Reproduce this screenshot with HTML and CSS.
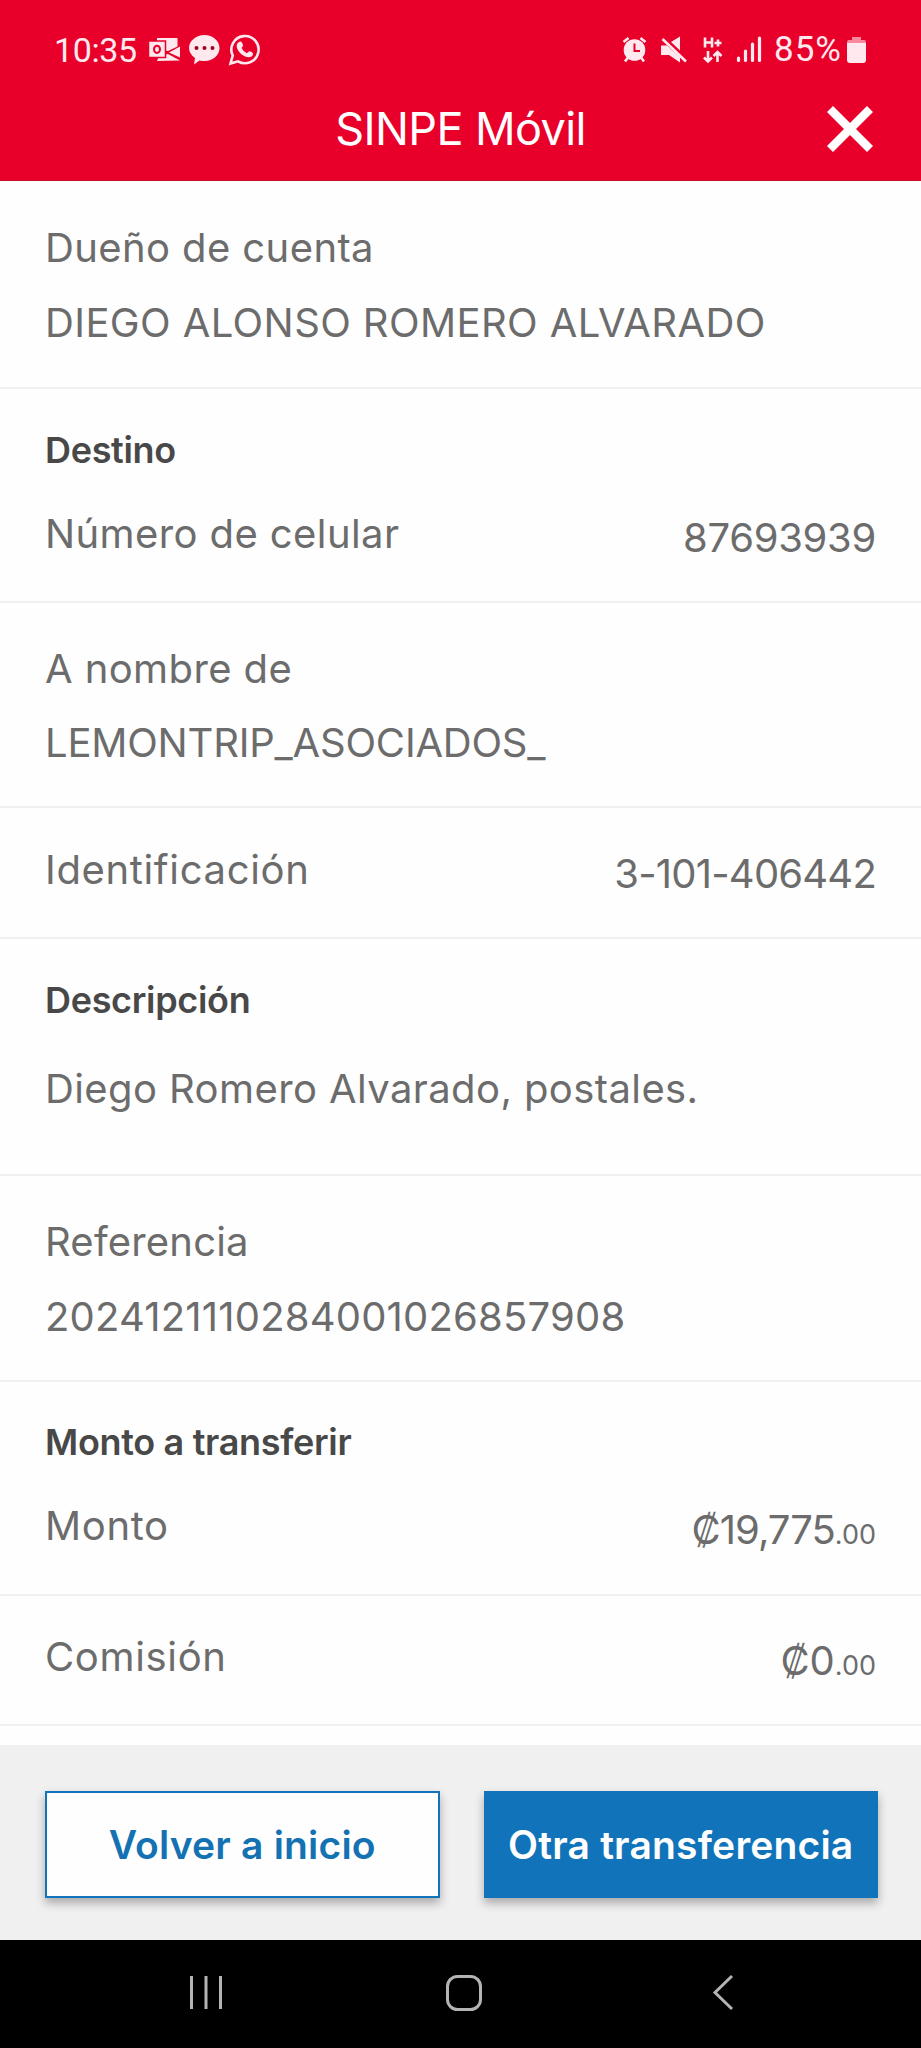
FILE: index.html
```html
<!DOCTYPE html>
<html lang="es">
<head>
<meta charset="utf-8">
<title>SINPE Móvil</title>
<link rel="stylesheet" href="styles.css">
</head>
<body>
<header class="top">
  <div class="status">
    <span class="clock">10:35</span>
    <svg class="ico-left" width="112" height="34" viewBox="0 0 112 34">
      <path class="w" d="M8 5h20.500v8.500L19 18l-11-2zM31 13.500v11L20 19.500zM8 28l2-5 9-2 12 6.500z"/>
      <rect class="w gap" x="-.5" y="8" width="17" height="16.500"/>
      <ellipse class="ring" cx="8" cy="16.300" rx="3" ry="3.600"/>
      <path class="w" d="M55.500 2C64 2 70.500 8 70.500 15s-6.500 13-15 13c-2 0-3 0-5-.5L45 31.500l1-6.500c-3.500-2.500-6-6-6-10C40 8 47 2 55.500 2z"/>
      <g class="dot"><circle cx="47.500" cy="15" r="2"/><circle cx="55.500" cy="15" r="2"/><circle cx="63.500" cy="15" r="2"/></g>
      <path class="line" d="M81.500 30.500l2.200-8A13.600 13.600 0 1 1 89 28.300z"/>
      <path class="w" d="M90 9c2-1.500 3 0 4 3 .5 1.500-1.500 2-1.300 3 1 2.500 3 4 5 5 1 .3 2-2 3-1.800 3 1.200 4 2 3 4-1 2-4 2.500-7 1.500-5-2-9-7-9-10.500 0-2 1-3.500 2.300-4.200z"/>
    </svg>
    <svg class="ico-right" width="140" height="28" viewBox="0 0 140 28">
      <circle class="w" cx="12.500" cy="14" r="10.800"/>
      <path class="line" d="M1.500 6l5-4M23.500 6l-5-4M6 21.500L3 25.500M19 21.500l3 4"/>
      <path class="cut" d="M12.500 7.500V15h5.500"/>
      <path class="w" d="M58 .5v14L49 6zM39 9.500h6L58 21v5.500L47 19h-8z"/>
      <path class="line" d="M40.500 3L64 25.500"/>
      <path class="line" d="M83 1.500v10M90 1.500v10M83 6.500h7M92.500 7h7M96 3.500v7M86 15v10M82 21.500l4 4 4-4M95.500 26V16M91.500 20l4-4 4 4"/>
      <path class="bars" d="M116.500 22v2.500M123.500 15v9.500M130.500 8v16.500M137.500 2v22.500"/>
    </svg>
    <span class="pct">85%</span>
    <svg class="batt" width="19" height="26" viewBox="0 0 19 26"><path class="dim" d="M5 0h9v3h3q2 0 2 2v2H0V5q0-2 2-2h3z"/><path class="w" d="M0 6h19v17q0 3-3 3H3q-3 0-3-3z"/></svg>
  </div>
  <div class="bar">
    <h1 class="title">SINPE Móvil</h1>
    <svg class="close" width="46" height="46" viewBox="0 0 46 46"><path d="M3 3l40 40M43 3L3 43"/></svg>
  </div>
</header>
<main>
  <section class="block owner"><p class="wide">Dueño de cuenta</p><p class="second wide">DIEGO ALONSO ROMERO ALVARADO</p></section>
  <section class="block dest"><h2>Destino</h2><div class="row"><p class="wide">Número de celular</p><p class="val phone">87693939</p></div></section>
  <section class="block name"><p class="wide">A nombre de</p><p class="second tight">LEMONTRIP_ASOCIADOS_</p></section>
  <section class="block ident"><div class="row"><p class="wider">Identificación</p><p class="val idnum">3-101-406442</p></div></section>
  <section class="block desc"><h2>Descripción</h2><p class="text wide">Diego Romero Alvarado, postales.</p></section>
  <section class="block ref"><p class="snug">Referencia</p><p class="second snug">2024121110284001026857908</p></section>
  <section class="block amount"><h2>Monto a transferir</h2><div class="row"><p class="wider">Monto</p><p class="val"><span class="sum">₡19,775</span><small>.00</small></p></div></section>
  <section class="block fee"><div class="row"><p class="wider">Comisión</p><p class="val">₡0<small>.00</small></p></div></section>
</main>
<footer class="actions">
  <button class="btn ghost">Volver a inicio</button>
  <button class="btn solid">Otra transferencia</button>
</footer>
<nav class="sysnav">
  <svg width="921" height="108" viewBox="0 0 921 108"><path d="M191.500 36v33M206 36v33M220.500 36v33M732 36L715 52.500 732 69"/><rect x="447.500" y="36.500" width="33" height="33" rx="10"/></svg>
</nav>
</body>
</html>
```
FILE: styles.css
```css
* { box-sizing: border-box; margin: 0; padding: 0; }
body { width: 921px; height: 2048px; background: #fefefe; color: #6c6c6c; font: 400 40px/50px Inter, "Liberation Sans", sans-serif; overflow: hidden; }
svg { display: block; flex: none; }

/* Header: phone status line and title bar */
.top { height: 181px; background: #e8002b; color: #fff; border-bottom: 1px solid #c90a2f; }
.status { display: flex; height: 90px; padding: 34px 53px 0 54px; color: #ffe9ee; font: 400 34px/34px Roboto, sans-serif; }
.clock { width: 95px; margin-top: -1px; letter-spacing: -.4px; }
.ico-left { margin-top: -1px; overflow: visible; }
.ico-right { margin: 2px 0 0 361px; }
.pct { width: 73px; margin: -1px 0 0 12px; font-size: 35px; letter-spacing: 1px; }
.batt { margin-top: 3px; }
.w { fill: #ffe9ee; }
.gap { stroke: #e8002b; stroke-width: 1.5; }
.ring { fill: none; stroke: #e8002b; stroke-width: 2; }
.dim { fill: #f7889d; }
.dot { fill: #a00020; }
.cut { fill: none; stroke: #e8002b; stroke-width: 2; }
.line { fill: none; stroke: #ffe9ee; stroke-width: 2.6; }
.bars { stroke: #ffe9ee; stroke-width: 3.2; stroke-linecap: round; }
.bar { display: grid; grid-template-columns: 1fr auto; padding: 12px 48px 0 0; }
.title { grid-area: 1 / 1 / 2 / 3; padding-left: 48px; text-align: center; font-size: 45px; font-weight: 400; line-height: 54px; letter-spacing: -.6px; }
.close { grid-area: 1 / 2; margin-top: 4px; }
.close path { stroke: #fff; stroke-width: 8.5; }

/* Receipt sections */
.block { padding: 41px 45px 0; border-bottom: 2px solid #f0f0f0; }
.block h2 { color: #484848; font-size: 36px; font-weight: 600; line-height: 44px; letter-spacing: -.32px; }
.row { display: flex; justify-content: space-between; }
.second { margin-top: 25px; }
.wide { letter-spacing: .4px; }
.wider { letter-spacing: .65px; }
.snug { letter-spacing: .2px; }
.tight { letter-spacing: -.2px; }
.val { padding-top: 4px; }
.val small { font-size: 27px; }
.phone { letter-spacing: -.3px; }
.idnum { letter-spacing: -.8px; }
.sum { letter-spacing: -1px; }
.owner { height: 208px; padding-top: 42px; }
.dest { height: 214px; padding-top: 39px; }
.dest .row, .amount .row { margin-top: 37px; }
.name { height: 205px; }
.name .second { margin-top: 24px; }
.ident { height: 131px; padding-top: 37px; }
.desc { height: 237px; padding-top: 39px; }
.desc .text { margin-top: 42px; }
.ref { height: 206px; }
.amount { height: 214px; padding-top: 38px; }
.fee { height: 130px; padding-top: 36px; }

/* Bottom actions and system navigation */
.actions { display: flex; gap: 44px; height: 195px; margin-top: 19px; padding: 46px 43px 0 45px; background: #f0f0f0; }
.btn { flex: 1; height: 107px; border: 2px solid #1174ba; font: 600 39px/50px Inter, sans-serif; letter-spacing: .2px; box-shadow: 0 5px 9px rgba(0, 0, 0, .3); white-space: nowrap; }
.ghost { background: #fefefe; color: #1472b3; }
.solid { background: #1174ba; color: #fff; }
.sysnav { height: 108px; background: #000; }
.sysnav svg { fill: none; stroke: #b4b4b4; stroke-width: 3; }
```
